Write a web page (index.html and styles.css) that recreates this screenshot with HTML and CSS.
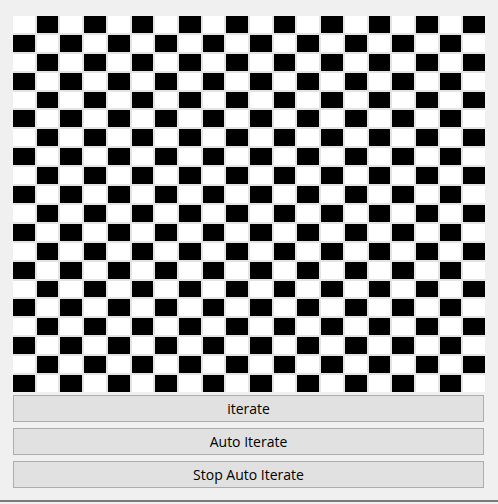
FILE: index.html
```html
<!DOCTYPE html>
<html>
<head>
<meta charset="utf-8">
<link rel="stylesheet" href="styles.css">
</head>
<body>
<div class="window">
  <div class="board" id="board"></div>
  <div class="buttons">
    <button class="btn">iterate</button>
    <button class="btn">Auto Iterate</button>
    <button class="btn">Stop Auto Iterate</button>
  </div>
</div>
<script src="script.js"></script>
</body>
</html>
```
FILE: styles.css
```css
html, body {
  margin: 0;
  padding: 0;
  background: #f0f0f0;
}
.window {
  width: 498px;
  height: 502px;
  box-sizing: border-box;
  padding: 16px 14px 0 13px;
  border-bottom: 2px solid #7a7a7a;
  display: flex;
  flex-direction: column;
  background: #f0f0f0;
}
.board {
  width: 472px;
  height: 376px;
  display: grid;
  grid-template-columns: repeat(20, 1fr);
  grid-template-rows: repeat(20, 1fr);
  gap: 2px;
  background: #e4e4e4;
}
.cell {
  background: #ffffff;
}
.cell.on {
  background: #000000;
}
.buttons {
  display: flex;
  flex-direction: column;
  gap: 6px;
  margin-top: 3px;
  width: 471px;
}
.btn {
  height: 27px;
  margin: 0;
  padding: 0 0 1px 0;
  background: #e1e1e1;
  border: 1px solid #adadad;
  font-family: "Open Sans", "Noto Sans", sans-serif;
  font-size: 14px;
  color: #000;
}
```
FILE: script.js
```js
var board = document.getElementById('board');
for (var r = 0; r < 20; r++) {
  for (var c = 0; c < 20; c++) {
    var d = document.createElement('div');
    d.className = 'cell' + ((r + c) % 2 === 1 ? ' on' : '');
    board.appendChild(d);
  }
}
```
